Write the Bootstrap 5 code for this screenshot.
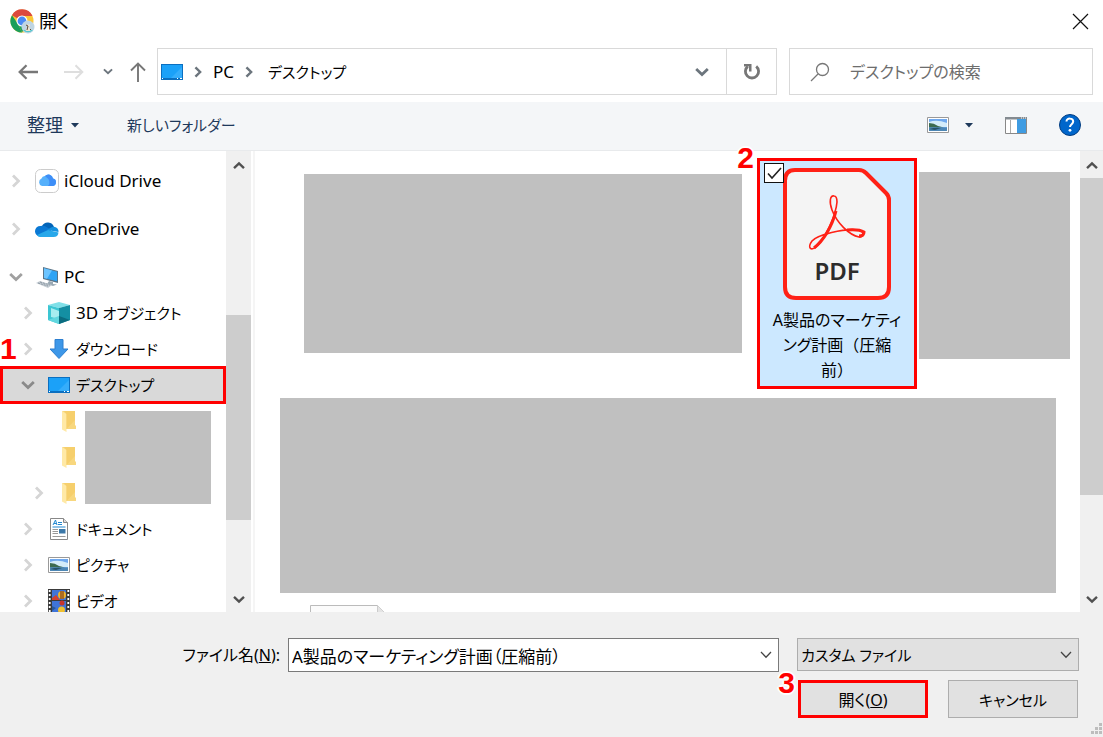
<!DOCTYPE html>
<html lang="ja">
<head>
<meta charset="utf-8">
<meta name="viewport" content="width=device-width, initial-scale=1">
<title>開く</title>
<link rel="stylesheet" href="https://cdn.jsdelivr.net/npm/bootstrap@5.3.0/dist/css/bootstrap.min.css">
<style>
  body { font-family: "Noto Sans", "Noto Sans CJK JP", sans-serif; font-size: 17px; line-height: 24px; color: #000; font-feature-settings: "palt"; background: #fff; }
  button, input, select { font-feature-settings: inherit; }
  svg { display: block; flex: none; }
  .plain { background: none; border: 0; padding: 0; color: inherit; display: flex; align-items: center; justify-content: center; }
  .kana { font-size: 15px; }
  .mixed { font-size: 16px; }
  .fullw { font-feature-settings: normal; }
  .dialog { height: 100vh; min-height: 600px; }
  .titlebar { height: 48px; padding: 0 14px 6px 10px; }
  .titlebar h1 { font-size: 18px; line-height: 24px; font-weight: 400; }
  .navrow { height: 54px; padding: 0 10px 7px 0; }
  .navbtns { width: 157px; flex: none; }
  .w-back { width: 55px; } .w-fwd { width: 37px; } .w-recent { width: 31px; } .w-up { width: 30px; }
  .address { flex: 1 1 0; border: 1px solid #d9d9d9; padding-left: 3px; }
  .address .crumb { color: #000; text-decoration: none; }
  .w-drop { width: 49px; }
  .w-reload { width: 50px; border-left: 1px solid #d9d9d9; }
  .search { flex: 0 1 304px; min-width: 0; border: 1px solid #d9d9d9; padding-left: 20px; margin-left: 12px; gap: 20px; }
  .search input { border: 0; outline: 0; min-width: 0; background: none; padding: 0; font-size: 16px; }
  .search input::placeholder { color: #6d6d6d; opacity: 1; }
  .cmdbar { height: 49px; background: #f4f6f8; border-bottom: 1px solid #e8eaec; color: #1e395b; padding: 0 22px 2px 27px; }
  .organize { font-size: 18px; }
  .panes { flex: 1 1 0; min-height: 0; }
  .treepane { width: 251px; flex: none; }
  .splitter { width: 4px; flex: none; border-right: 2px solid #f5f5f5; }
  .tree { width: 226px; flex: none; padding-top: 12px; overflow: hidden; }
  .node { height: 36px; flex: none; display: flex; align-items: center; width: 100%; position: relative; white-space: nowrap; }
  .node .twisty { width: 31px; display: flex; justify-content: center; }
  .node .ico { width: 24px; margin: 0 5px 0 4px; display: flex; justify-content: center; }
  .sub { padding-left: 12px; }
  .root { margin-bottom: 12px; }
  .picked { background: #d9d9d9; outline: 3px solid #f00; outline-offset: -2px; width: auto; margin: 0 1px; padding-left: 11px; }
  .deep { width: 85px; padding-left: 24px; }
  .redacted { background: #c0c0c0; }
  .redacted-tree { width: 126px; margin: 8px 0 7px; }
  .sbar { width: 25px; flex: none; background: #f0f0f0; display: flex; flex-direction: column; }
  .sbar .arrow { height: 27px; flex: none; padding-top: 2px; color: #505050; }
  .sbar .thumb { background: #cdcdcd; }
  .sbar.wide-list { width: 23px; }
  .step { position: absolute; font: bold 30px/30px "Liberation Sans", sans-serif; color: #f00; text-shadow: 2px 0 1px #fff, -2px 0 1px #fff, 0 2px 1px #fff, 0 -2px 1px #fff; z-index: 2; }
  .tile .step { top: -18px; right: 100%; margin-right: 6px; }
  .foot .step { top: -12px; right: 100%; margin-right: 3px; }
  .files { padding: 7px 10px 0 25px; min-width: 0; }
  .redacted-a { flex: 438 1 0; height: 179px; margin: 16px 15px 0 24px; }
  .redacted-b { flex: 151 1 0; height: 187px; margin: 14px 0 0 2px; }
  .redacted-c { height: 195px; margin: 9px 14px 0 0; }
  .tile { width: 160px; height: 231px; flex: none; border: 3px solid #f00; background: #cce8ff; position: relative; padding-top: 6px; }
  .tile input { position: absolute; left: 4px; top: 2px; width: 20px; height: 20px; margin: 0; appearance: none; background: #fff; border: 1px solid #111; border-radius: 0; }
  .tile .tick { position: absolute; left: 7px; top: 6px; pointer-events: none; }
  .pdfword { font: 600 24px "Noto Sans", sans-serif; }
  .tile .fname { padding: 0 10px; margin-top: 7px; display: block; text-align: center; word-break: break-all; line-height: 25px; }
  .nextfile { margin: 12px 0 0 30px; }
  .foot { height: 125px; flex: none; background: #f0f0f0; padding: 26px 24px 0 0; position: relative; }
  .fields { gap: 18px; }
  .namebox { flex: 491 1 0; margin-left: -10px; }
  .fname-label { width: 280px; text-align: right; }
  .namebox input { width: 100%; height: 34px; border: 1px solid #7a7a7a; padding: 0 30px 0 3px; background: #fff; border-radius: 0; }
  .typebox { width: 282px; flex: none; }
  .typebox select { width: 100%; height: 33px; appearance: none; border: 1px solid #adadad; background: #e1e1e1; padding: 0 28px 0 3px; border-radius: 0; color: #000; }
  .chev { position: absolute; right: 7px; top: 13px; pointer-events: none; }
  .actions { gap: 20px; padding: 8px 1px 0 0; }
  .btn.dlg { width: 130px; height: 38px; border-radius: 0; border: 1px solid #adadad; background: #e1e1e1; line-height: 24px; padding: 2px 0 0; color: #000; }
  .btn.dlg.hot { border: 3px solid #f00; }
  .grip { position: absolute; right: 0; bottom: 2px; }
</style>
<script src="https://cdn.jsdelivr.net/npm/bootstrap@5.3.0/dist/js/bootstrap.bundle.min.js"></script>
</head>
<body>
<svg width="0" height="0" class="position-absolute" aria-hidden="true">
  <defs>
    <symbol id="right" viewBox="0 0 10 14"><path d="M2 1.500 7.500 7 2 12.500" fill="none" stroke="currentColor" stroke-width="2.800"/></symbol>
    <symbol id="down" viewBox="0 0 14 10"><path d="M1.200 2 7 7.500 12.800 2" fill="none" stroke="currentColor" stroke-width="2.800"/></symbol>
    <symbol id="up" viewBox="0 0 14 10"><path d="M1.200 8 7 2.500 12.800 8" fill="none" stroke="currentColor" stroke-width="2.800"/></symbol>
    <symbol id="thin" viewBox="0 0 12 8"><path d="M1 1 6 6.200 11 1" fill="none" stroke="#444" stroke-width="1.300"/></symbol>
    <symbol id="desk" viewBox="0 0 22 16"><path d="M0 0h22v16H0z" fill="#0b6fc0"/><path d="M1 1h20v13H1z" fill="#1ba1f8"/><path d="M10 14 21 3v11z" fill="#35adfb"/><path d="M1 14.500h1m14 0h1m2 0h2" stroke="#fff"/></symbol>
    <symbol id="pic" viewBox="0 0 22 16"><path d="M.5.5h21v15H.5z" fill="#fff" stroke="#999"/><path d="M2 2h18v12H2z" fill="#6fa8ee"/><path d="M2 5q8-3 18 1v4H2z" fill="#d4ecfa"/><path d="M2 6q5 0 9 3l6 1.500H2z" fill="#3d6b50"/><path d="M2 10.500h18V14H2z" fill="#4d87b5"/><path d="M2 12q7-2 12-1l-6 2z" fill="#27526b"/></symbol>
    <symbol id="folder" viewBox="0 0 14 21"><path d="M0 0h13v14l1 1v3H4z" fill="#f8d77e"/><path d="M0 0 4.500 3v18L0 18.500z" fill="#ffe9a6"/><path d="M4.500 3v15L13 9V0H2z" fill="#f6cf6c"/></symbol>
  </defs>
</svg>

<main class="dialog d-flex flex-column">
  <header class="titlebar d-flex align-items-center">
    <svg width="25" height="25" viewBox="0 0 25 25"><circle cx="12" cy="12" r="11.500" fill="#fbc735"/><path d="M12 12 2 6.200A11.500 11.500 0 0 1 22.500 7H12z" fill="#dc4a3e"/><path d="M2 6.200 8 15l4 8.500A11.500 11.500 0 0 1 2 6.200z" fill="#1b9e5a"/><path d="m8 15 8 1-4 7.500z" fill="#1b9e5a"/><circle cx="12" cy="12" r="5.500" fill="#fff"/><circle cx="12" cy="12" r="4.400" fill="#4a8af4"/><circle cx="18" cy="18" r="6.500" fill="#bfd5e3"/><path d="M13 21a6.500 6.500 0 0 0 10 0z" fill="#4fc6cf"/><path d="M16.500 14.500 18 16l1.500-1 .5 2-1 1 1.500 4h-5l1.500-4z" fill="#eee3cd"/><path d="m16 16 2 1-1 4m3-1 1 1" stroke="#5b4b3b" fill="none"/></svg>
    <h1 class="mb-0 ms-1">開く</h1>
    <button class="plain ms-auto" aria-label="閉じる"><svg width="17" height="17" viewBox="0 0 17 17"><path d="m1 1 15 15M16 1 1 16" stroke="#111" stroke-width="1.200"/></svg></button>
  </header>

  <nav class="navrow d-flex" aria-label="場所">
    <div class="navbtns d-flex">
      <button class="plain w-back" aria-label="戻る"><svg width="20" height="16" viewBox="0 0 20 16"><path d="M20 8H2M8.500 1.200 1.700 8l6.800 6.800" fill="none" stroke="#777" stroke-width="2.300"/></svg></button>
      <button class="plain w-fwd" aria-label="進む"><svg width="20" height="16" viewBox="0 0 20 16"><path d="M0 8h18M11.500 1.200 18.300 8l-6.800 6.800" fill="none" stroke="#dedede" stroke-width="2"/></svg></button>
      <button class="plain w-recent" aria-label="最近表示した場所"><svg class="text-secondary" width="10" height="7"><use href="#down"/></svg></button>
      <button class="plain w-up" aria-label="上へ"><svg width="16" height="20" viewBox="0 0 16 20"><path d="M8 20V2M1 8.500l7-7 7 7" fill="none" stroke="#777" stroke-width="1.900"/></svg></button>
    </div>
    <div class="address d-flex align-items-stretch">
      <div class="d-flex align-items-center flex-grow-1">
        <svg width="22" height="16"><use href="#desk"/></svg>
        <svg class="ms-2 text-secondary" width="14" height="12"><use href="#right"/></svg>
        <a class="crumb ms-2" href="#">PC</a>
        <svg class="ms-2 text-secondary me-1" width="14" height="12"><use href="#right"/></svg>
        <a class="crumb kana ms-2" href="#">デスクトップ</a>
      </div>
      <button class="plain w-drop text-secondary" aria-label="以前の場所"><svg width="14" height="10"><use href="#down"/></svg></button>
      <button class="plain w-reload" aria-label="最新の情報に更新"><svg width="18" height="18" viewBox="0 0 18 18"><path d="M13.200 3.300a6.600 6.600 0 1 1-8.400 0" fill="none" stroke="#777" stroke-width="2.800"/><path d="M1 1h7.500v7.500H6V3.500H1z" fill="#777"/></svg></button>
    </div>
    <label class="search d-flex align-items-center">
      <svg width="20" height="20" viewBox="0 0 20 20"><circle cx="12.500" cy="7.500" r="6" fill="none" stroke="#777" stroke-width="1.300"/><path d="M8 12 1 19" stroke="#777" stroke-width="1.300"/></svg>
      <input class="flex-grow-1" type="search" aria-label="検索" placeholder="デスクトップの検索">
    </label>
  </nav>

  <div class="cmdbar d-flex align-items-center">
    <button class="plain organize gap-2">整理 <svg width="8" height="5"><path d="M0 0h8L4 4.500z" fill="#1e395b"/></svg></button>
    <button class="plain kana ms-5">新しいフォルダー</button>
    <button class="plain ms-auto" aria-label="表示方法"><svg width="22" height="16"><use href="#pic"/></svg><svg class="ms-3" width="8" height="5"><path d="M0 0h8L4 4.500z" fill="#1e395b"/></svg></button>
    <button class="plain px-4 mx-2" aria-label="プレビュー ウィンドウ"><svg width="22" height="17" viewBox="0 0 22 17"><path d="M.5.5h21v16H.5z" fill="#fff" stroke="#888"/><path d="M0 0h22v2.500H0z" fill="#848b91"/><path d="M5.500 3v13" stroke="#aaa"/><path d="M12 2h9v14h-9z" fill="#3f9ce2"/><path d="M16 1h1m1 0h1m1 0h1" stroke="#fff"/></svg></button>
    <button class="plain" aria-label="ヘルプ"><svg width="22" height="22" viewBox="0 0 22 22"><circle cx="11" cy="11" r="10.500" fill="#0066cb" stroke="#003c80"/><path d="M7.500 7.500C7.500 3.600 14.200 3.700 14.200 7.600c0 2.500-3.200 2.700-3.200 5.400" fill="none" stroke="#fff" stroke-width="2"/><circle cx="11" cy="16.300" r="1.400" fill="#fff"/></svg></button>
  </div>

  <div class="panes d-flex">
    <aside class="treepane d-flex">
      <div class="tree d-flex flex-column">
        <button class="plain node root justify-content-start"><span class="twisty"><svg width="10" height="14" style="color:#d5d5d5"><use href="#right"/></svg></span><span class="ico"><svg width="24" height="24" viewBox="0 0 24 24"><rect x=".5" y=".5" width="23" height="23" rx="5" fill="#fff" stroke="#ccc"/><path d="M7 17a4 4 0 0 1-.5-7.500A3.500 3.500 0 0 1 10 7a4.600 4.600 0 0 1 8 2.500A3.800 3.800 0 0 1 17.500 17z" fill="#55b0fb"/><path d="M10 7a4.600 4.600 0 0 1 8 2.500A3.800 3.800 0 0 1 17.500 17H13q4-5-3-10z" fill="#3e8ef7"/></svg></span>iCloud Drive</button>
        <button class="plain node root justify-content-start"><span class="twisty"><svg width="10" height="14" style="color:#d5d5d5"><use href="#right"/></svg></span><span class="ico"><svg width="24" height="16" viewBox="0 0 24 16"><path d="M7 5a6.500 6.500 0 0 1 12 1l-5 5z" fill="#0364b8"/><path d="M5 15.500A5.200 5.200 0 0 1 5.500 5q3-1 6 1l5 3-9 6z" fill="#0a78d4"/><path d="m12 9 4-2.500q2-1 4-.5a5 5 0 0 1 3.500 5z" fill="#1490df"/><path d="M2 14 13 9l10.500 2.500q-.5 4.500-5 4.500H5q-2 0-3-2z" fill="#28a8ea"/></svg></span>OneDrive</button>
        <button class="plain node justify-content-start"><span class="twisty"><svg width="14" height="10" style="color:#a0a0a0"><use href="#down"/></svg></span><span class="ico"><svg width="24" height="22" viewBox="0 0 24 22"><path d="M8 1 23 5v12L8 13z" fill="#5a7488"/><path d="M9 2.300 22 5.800v9.500L9 12z" fill="#2fa4f5"/><path d="m9 2.300 8 2.200L12 12.800 9 12z" fill="#6cc4ff"/><path d="m14 15 4 1v2l4 .5-4 1.500-6-2z" fill="#9aa9b4"/><path d="m1 17 4-2 12 4-4 3z" fill="#c4ccd3"/><path d="m3 17 10 3m-8-4 10 3" stroke="#8c99a3" stroke-dasharray="2 1"/></svg></span>PC</button>
        <button class="plain node sub justify-content-start"><span class="twisty"><svg width="10" height="14" style="color:#d5d5d5"><use href="#right"/></svg></span><span class="ico"><svg width="22" height="22" viewBox="0 0 22 22"><path d="M11 0 22 3 11 6 0 3z" fill="#7fe0e8"/><path d="m0 3 11 3v16L0 18z" fill="#3cc6d3"/><path d="m22 3-11 3v16l11-4z" fill="#148fa3"/><path d="m3 6 8 3v8l-8-2z" fill="#a8edf0"/><path d="m22 18-11-4v8z" fill="#0b6c80"/><path d="m0 18 11-4v8z" fill="#62d7df"/></svg></span><span>3D <span class="kana">オブジェクト</span></span></button>
        <button class="plain node sub justify-content-start"><span class="step start-0">1</span><span class="twisty"><svg width="10" height="14" style="color:#d5d5d5"><use href="#right"/></svg></span><span class="ico"><svg width="20" height="20" viewBox="0 0 20 20"><path d="M6 .5h8V10h5l-9 9.500L1 10h5z" fill="#3d97e8" stroke="#2c7fd0"/></svg></span><span class="kana">ダウンロード</span></button>
        <button class="plain node sub picked justify-content-start"><span class="twisty"><svg width="14" height="10" style="color:#8a8a8a"><use href="#down"/></svg></span><span class="ico"><svg width="22" height="16"><use href="#desk"/></svg></span><span class="kana">デスクトップ</span></button>
        <div class="d-flex">
          <div>
            <button class="plain node deep justify-content-start" aria-label="フォルダー 1"><span class="twisty"></span><span class="ico"><svg width="14" height="21"><use href="#folder"/></svg></span></button>
            <button class="plain node deep justify-content-start" aria-label="フォルダー 2"><span class="twisty"></span><span class="ico"><svg width="14" height="21"><use href="#folder"/></svg></span></button>
            <button class="plain node deep justify-content-start" aria-label="フォルダー 3"><span class="twisty"><svg width="10" height="14" style="color:#d5d5d5"><use href="#right"/></svg></span><span class="ico"><svg width="14" height="21"><use href="#folder"/></svg></span></button>
          </div>
          <div class="redacted redacted-tree"></div>
        </div>
        <button class="plain node sub justify-content-start"><span class="twisty"><svg width="10" height="14" style="color:#d5d5d5"><use href="#right"/></svg></span><span class="ico"><svg width="18" height="22" viewBox="0 0 18 22"><path d="M.5.5h13l4 4v17H.5z" fill="#fff" stroke="#888"/><path d="M13.500.5v4h4" fill="#ddd" stroke="#888"/><path d="m3 7 2.500-5L7 7M4 5.500h2.500M8 4.500h4M8 6.500h4M2.500 9h13" stroke="#2287cf" fill="none"/><path d="M2.500 11.500H8m-5.500 2H8m-5.500 2H8m-5.500 3h13" stroke="#999"/><path d="M9 11h6.500v4.500H9z" fill="#3c78a8"/></svg></span><span class="kana">ドキュメント</span></button>
        <button class="plain node sub justify-content-start"><span class="twisty"><svg width="10" height="14" style="color:#d5d5d5"><use href="#right"/></svg></span><span class="ico"><svg width="22" height="16"><use href="#pic"/></svg></span><span class="kana">ピクチャ</span></button>
        <button class="plain node sub justify-content-start"><span class="twisty"><svg width="10" height="14" style="color:#d5d5d5"><use href="#right"/></svg></span><span class="ico"><svg width="22" height="24" viewBox="0 0 22 24"><path d="M0 0h22v24H0z" fill="#3a3a3a"/><path d="M1.700 1v23M20.300 1v23" stroke="#fff" stroke-width="1.800" stroke-dasharray="2 2"/><path d="M4 1h14v10H4zM4 12h14v12H4z" fill="#3f74d8"/><circle cx="14" cy="6" r="4" fill="#f0b429"/><path d="M13 2v8m2-8v8" stroke="#6a241b"/><path d="m4 9 4-3 4 5H4z" fill="#d2412e"/><circle cx="14" cy="14" r="2.500" fill="#c9352b"/><circle cx="13.500" cy="21" r="3.500" fill="#f0c030"/><path d="m4 17 4 2-4 3z" fill="#28589a"/></svg></span><span class="kana">ビデオ</span></button>
      </div>
      <div class="sbar">
        <div class="arrow d-flex align-items-center justify-content-center"><svg width="12" height="9"><use href="#up"/></svg></div>
        <div style="flex:137 1 0"></div><div class="thumb" style="flex:205 1 0"></div><div style="flex:65 1 0"></div>
        <div class="arrow d-flex align-items-center justify-content-center"><svg width="12" height="9"><use href="#down"/></svg></div>
      </div>
    </aside>
    <div class="splitter"></div>
    <section class="files flex-grow-1" aria-label="ファイル">
      <div class="d-flex align-items-start">
        <div class="redacted redacted-a"></div>
        <label class="tile">
          <span class="step">2</span>
          <input type="checkbox" checked>
          <svg class="tick" width="15" height="13" viewBox="0 0 15 13"><path d="m1 6.500 4 4.500L14 1" fill="none" stroke="#222" stroke-width="1.600"/></svg>
          <svg class="mx-auto" width="108" height="134" viewBox="0 0 108 134"><path d="M12 3h64q4 0 7 3l20 20q3 3 3 7v87q0 11-11 11H13Q2 131 2 120V14Q2 3 12 3z" fill="#f4f4f4" stroke="#ff2116" stroke-width="4"/><path d="M51 29c-4-1-5 6-2 14 5 13 17 25 27 27 5 1 6-6-1-7-14-2-41 5-46 11-5 7-1 10 4 6C42 72 53 48 54 35c0-4-1-6-3-6z" fill="none" stroke="#ff2116" stroke-width="1.600"/><path d="M53 44C49 60 40 74 31 81m33-18q12-1 17 2 0 4-5 4" fill="none" stroke="#ff2116" stroke-width="3"/><text class="pdfword" x="54" y="113" text-anchor="middle" fill="#2c2c2c">PDF</text></svg>
          <span class="fname mixed">A製品のマーケティ<br>ング計画<span class="fullw">（圧縮<br>前）</span></span>
        </label>
        <div class="redacted redacted-b"></div>
      </div>
      <div class="redacted redacted-c"></div>
      <svg class="nextfile" width="78" height="90"><path d="M.5 90V.5h67l10 10V90" fill="#fbfbfb" stroke="#bbb"/><path d="M67.500.5v10h10" fill="#e4e4e4" stroke="#ccc"/></svg>
    </section>
    <div class="sbar wide-list">
      <div class="arrow d-flex align-items-center justify-content-center"><svg width="12" height="9"><use href="#up"/></svg></div>
      <div class="thumb" style="flex:317 1 0"></div><div style="flex:90 1 0"></div>
      <div class="arrow d-flex align-items-center justify-content-center"><svg width="12" height="9"><use href="#down"/></svg></div>
    </div>
  </div>

  <form class="foot">
    <div class="fields d-flex">
      <label class="fname-label mixed align-self-center" for="fname">ファイル名(<u>N</u>):</label>
      <div class="namebox position-relative"><input id="fname" type="text" value="A製品のマーケティング計画（圧縮前）"><svg class="chev" width="12" height="8"><use href="#thin"/></svg></div>
      <div class="typebox position-relative"><select class="kana" aria-label="ファイルの種類"><option>カスタム ファイル</option></select><svg class="chev" width="12" height="8"><use href="#thin"/></svg></div>
    </div>
    <div class="actions d-flex justify-content-end">
      <div class="position-relative"><span class="step">3</span><button type="button" class="btn dlg hot mixed">開く(<u>O</u>)</button></div>
      <button type="button" class="btn dlg kana">キャンセル</button>
    </div>
    <svg class="grip" width="12" height="12"><path d="M8 0h3v3H8zM4 4h3v3H4zM8 4h3v3H8zM0 8h3v3H0zM4 8h3v3H4zM8 8h3v3H8z" fill="#bdbdbd"/></svg>
  </form>
</main>
</body>
</html>
